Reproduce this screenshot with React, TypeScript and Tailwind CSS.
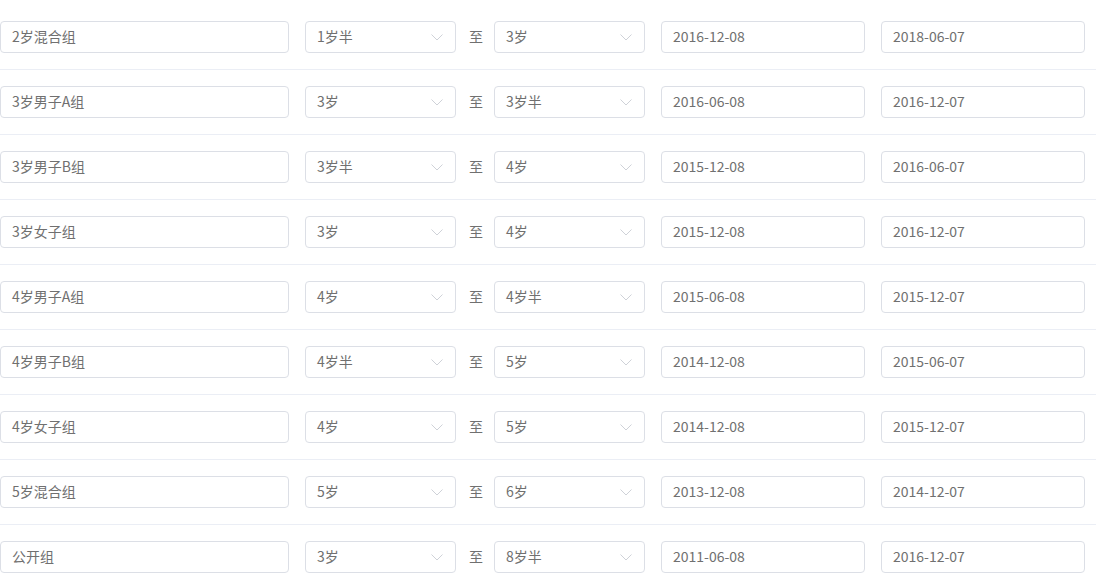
const rows = [
  ["2岁混合组", "1岁半", "3岁", "2016-12-08", "2018-06-07"],
  ["3岁男子A组", "3岁", "3岁半", "2016-06-08", "2016-12-07"],
  ["3岁男子B组", "3岁半", "4岁", "2015-12-08", "2016-06-07"],
  ["3岁女子组", "3岁", "4岁", "2015-12-08", "2016-12-07"],
  ["4岁男子A组", "4岁", "4岁半", "2015-06-08", "2015-12-07"],
  ["4岁男子B组", "4岁半", "5岁", "2014-12-08", "2015-06-07"],
  ["4岁女子组", "4岁", "5岁", "2014-12-08", "2015-12-07"],
  ["5岁混合组", "5岁", "6岁", "2013-12-08", "2014-12-07"],
  ["公开组", "3岁", "8岁半", "2011-06-08", "2016-12-07"],
];

const Box = ({ text, width }: { text: string; width: string }) => (
  <div
    className={`${width} h-8 shrink-0 rounded-[4px] border border-[#dcdfe6] bg-white pl-[11px] pb-[2px] flex items-center text-[14px] leading-5 text-[#707070]`}
  >
    {text}
  </div>
);

const Select = ({ text }: { text: string }) => (
  <div className="w-[151px] h-8 shrink-0 rounded-[4px] border border-[#dcdfe6] bg-white pl-[11px] pr-[12px] flex items-center justify-between text-[14px] leading-5 text-[#707070]">
    <span className="pb-[2px]">{text}</span>
    <svg width="12" height="7" viewBox="0 0 12 7" fill="none">
      <path d="M0.5 0.5L6 6L11.5 0.5" stroke="#cfd2d8" strokeWidth="1" />
    </svg>
  </div>
);

const App = () => {
  return (
    <div
      className="w-full min-h-screen bg-white pt-[5px]"
      style={{ fontFamily: '"Microsoft YaHei", "Noto Sans CJK SC", sans-serif' }}
    >
      {rows.map((r, i) => (
        <div key={i} className="border-b border-[#ebeef5] py-4 pr-[11px]">
          <div className="flex items-center">
            <Box text={r[0]} width="w-[289px]" />
            <div className="ml-4">
              <Select text={r[1]} />
            </div>
            <div className="w-[38px] pl-[2px] pb-[2px] text-center text-[14px] leading-5 text-[#707070]">至</div>
            <Select text={r[2]} />
            <div className="ml-4">
              <Box text={r[3]} width="w-[204px]" />
            </div>
            <div className="ml-4">
              <Box text={r[4]} width="w-[204px]" />
            </div>
          </div>
        </div>
      ))}
    </div>
  );
};

export default App;
